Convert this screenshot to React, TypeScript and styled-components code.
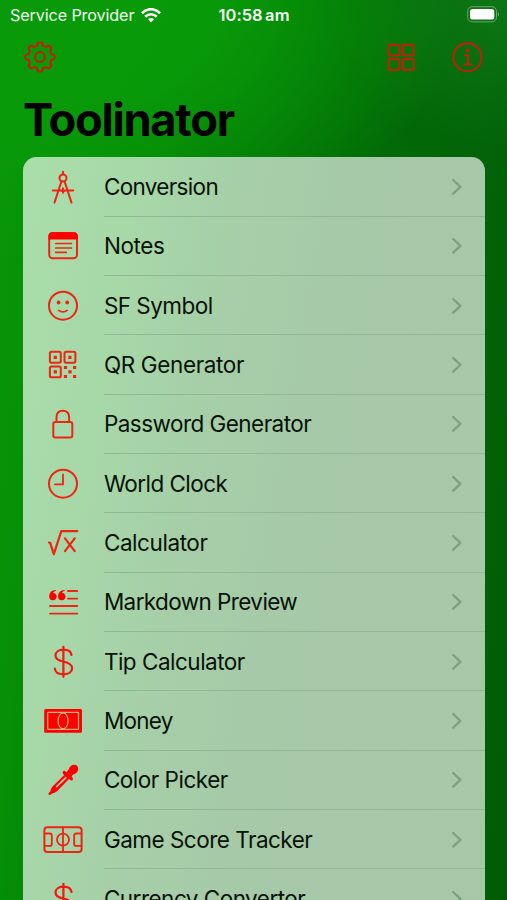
import React from "react";
import styled, { createGlobalStyle } from "styled-components";

const Global = createGlobalStyle`
  *, *::before, *::after { box-sizing: border-box; }
  body { margin: 0; overflow: hidden; }
`;

const Screen = styled.main`
  height: 900px;
  overflow: hidden;
  display: flex;
  flex-direction: column;
  font-family: Inter, "Liberation Sans", sans-serif;
  background:
    radial-gradient(ellipse 170px 150px at 100% 0, rgba(24, 136, 34, 0.5), transparent),
    radial-gradient(ellipse 400px 260px at 60px 0, #089a09 0%, rgba(8, 154, 9, 0.95) 40%, rgba(4, 140, 6, 0) 100%),
    linear-gradient(96deg, #089708 0%, #068f07 14%, #037a05 36%, #026c06 62%, #026308 84%, #015b05 100%);
`;

const StatusBar = styled.header`
  height: 30px;
  flex: none;
  display: grid;
  grid-template-columns: 1fr auto 1fr;
  align-items: center;
  padding: 0 8px 0 10px;
  color: #f1fff1;
  font-size: 16.5px;
`;

const Carrier = styled.div`
  display: flex;
  align-items: center;
  gap: 7px;
  white-space: nowrap;
  font-size: 16.2px;
  letter-spacing: -0.13px;
`;

const Time = styled.time`
  margin-right: 1px;
  font-weight: 600;
  letter-spacing: 0.04px;
  word-spacing: -1.8px;
`;

const Power = styled.div`
  display: flex;
  justify-content: flex-end;
  margin-top: -1px;
`;

const Toolbar = styled.nav`
  height: 54px;
  flex: none;
  display: flex;
  align-items: center;
  gap: 34px;
  padding: 0 22.5px 0 23.4px;
  color: #c81c0a;
`;

const ToolButton = styled.button<{ $push?: boolean }>`
  display: flex;
  padding: 0;
  border: 0;
  background: none;
  color: inherit;
  margin-right: ${(p) => (p.$push ? "auto" : "0")};
`;

const Title = styled.h1`
  height: 73.4px;
  flex: none;
  margin: 0;
  padding: 6px 0 0 23px;
  font-size: 45.3px;
  line-height: 60px;
  font-weight: 700;
  letter-spacing: -1.28px;
  color: #000;
`;

const List = styled.ul`
  flex: none;
  list-style: none;
  margin: 0 21.7px 0 22.6px;
  padding: 0;
  border-radius: 13.5px 13.5px 0 0;
  background: linear-gradient(100deg, #a9dea9 0%, #a7d8a8 20%, #a6cea8 38%, #a6c9a8 58%, #a8c7a9 100%);
`;

const Row = styled.li`
  height: 59.33px;
  display: flex;
  align-items: stretch;
`;

const IconCell = styled.div`
  width: 81.3px;
  flex: none;
  display: flex;
  align-items: center;
  justify-content: center;
  color: #ee2415;
`;

const RowBody = styled.div`
  flex: 1;
  display: flex;
  align-items: center;
  justify-content: space-between;
  padding: 1.2px 22px 0 0;
  border-bottom: 1px solid #91b795;
`;

const Label = styled.span<{ $tracking: number }>`
  font-size: 22.5px;
  line-height: 30px;
  letter-spacing: ${(p) => p.$tracking}px;
  color: #071207;
  white-space: nowrap;
`;

const Glyph = ({ children }: { children: React.ReactNode }) => (
  <svg width="44" height="44" viewBox="0 0 44 44" fill="none" stroke="currentColor" strokeWidth="2" strokeLinecap="round" strokeLinejoin="round">
    {children}
  </svg>
);

const gearPath = (() => {
  const points: string[] = [];
  for (let i = 0; i < 8; i++) {
    const base = i * 45;
    [[-17, 11.5], [-13, 12], [-11, 13.2], [-8.5, 14.2], [-4, 14.6], [4, 14.6], [8.5, 14.2], [11, 13.2], [13, 12], [17, 11.5], [22.5, 11.7]].forEach(([a, r]) => {
      const t = ((base + a) * Math.PI) / 180;
      points.push(`${(17 + r * Math.sin(t)).toFixed(2)} ${(17 - r * Math.cos(t)).toFixed(2)}`);
    });
  }
  return `M${points.join("L")}Z`;
})();

const Gear = () => (
  <svg width="34" height="34" viewBox="0 0 34 34" fill="none" stroke="currentColor" strokeWidth="2" strokeLinejoin="round">
    <path d={gearPath} />
    <circle cx="17" cy="17" r="4.9" />
  </svg>
);

const Grid = () => (
  <svg width="30" height="30" viewBox="0 0 30 30" fill="none" stroke="currentColor" strokeWidth="2">
    <rect x="1.500" y="2.800" width="10.800" height="10.800" rx="1.700" />
    <rect x="15.900" y="2.800" width="10.800" height="10.800" rx="1.700" />
    <rect x="1.500" y="17.200" width="10.800" height="10.800" rx="1.700" />
    <rect x="15.900" y="17.200" width="10.800" height="10.800" rx="1.700" />
  </svg>
);

const Info = () => (
  <svg width="34" height="34" viewBox="0 0 34 34" fill="none" stroke="currentColor" strokeWidth="2" strokeLinecap="round" strokeLinejoin="round">
    <circle cx="16.500" cy="17.200" r="14" />
    <circle cx="16.500" cy="10.500" r="1.900" fill="currentColor" stroke="none" />
    <path d="M13.700 15.200h3.300v9M13.400 24.400h6.800" strokeWidth="2" />
  </svg>
);

const Wifi = () => (
  <svg width="20" height="15" viewBox="0 0 20 15" fill="none" stroke="#fff" strokeWidth="2.700">
    <path d="M1 5.200C6-.1 14-.1 19 5.200M4.300 8.700c3.200-3.300 8.200-3.300 11.400 0" />
    <path d="M7 11.200c1.800-1.500 4.200-1.500 6 0L10 14.400Z" fill="#fff" stroke="none" />
  </svg>
);

const Battery = () => (
  <svg width="32" height="17" viewBox="0 0 32 17">
    <rect x=".7" y=".7" width="28.800" height="15.200" rx="4.500" fill="none" stroke="#6aa76d" />
    <rect x="3" y="3" width="24.300" height="10.600" rx="2.700" fill="#fff" />
    <path d="M30.800 6v4.600q1.400-.8 1.200-2.300t-1.200-2.300" fill="#6aa76d" />
  </svg>
);

const Chevron = () => (
  <svg width="12" height="18" viewBox="0 0 12 18" fill="none" stroke="#7da183" strokeWidth="2.400" strokeLinecap="round" strokeLinejoin="round">
    <path d="m2.200 2 7.200 6.800-7.200 6.800" />
  </svg>
);

const Compass = () => (
  <Glyph>
    <path d="M22 6.800V9M20.400 16.500 13.500 37.600M23.600 16.500l6.900 21.100M11.800 25.500h20.400M22 23.200v4.500" />
    <circle cx="22" cy="13" r="3.500" />
    <path d="M19.300 25.400q2.700 2 5.400 0" strokeWidth="1.200" />
  </Glyph>
);

const Note = () => (
  <Glyph>
    <rect x="8.200" y="9" width="27.800" height="25.200" rx="3.500" />
    <path d="M8.200 14.700v-2.300q0-3.400 3.400-3.400h21q3.400 0 3.400 3.400v2.300Z" fill="#f00" stroke="#f00" strokeWidth="1.500" />
    <path d="M14.800 19.500h15.600M14.800 24h15.600M14.800 28.400h10.400" strokeWidth="1.700" />
  </Glyph>
);

const Smile = () => (
  <Glyph>
    <circle cx="22" cy="21.700" r="14" />
    <circle cx="17.600" cy="18.500" r="1.900" fill="currentColor" stroke="none" />
    <circle cx="26.200" cy="18.500" r="1.900" fill="currentColor" stroke="none" />
    <path d="M17.600 26.400q4.300 3 8.600 0" strokeWidth="1.700" />
  </Glyph>
);

const QrCode = () => (
  <Glyph>
    <rect x="8.900" y="8.800" width="10.900" height="10.900" rx="1.600" />
    <rect x="23.500" y="8.800" width="10.900" height="10.900" rx="1.600" />
    <rect x="8.900" y="23.400" width="10.900" height="10.900" rx="1.600" />
    <path d="M12.700 12.700h3.200v3.200h-3.200ZM27.300 12.700h3.200v3.200h-3.200ZM12.700 27.200h3.200v3.200h-3.200ZM22.900 22.900h3.200v3.200h-3.200ZM32 22.900h3.200v3.200h-3.200ZM27.400 27.300h3.200v3.200h-3.200ZM22.900 31.900h3.200v3.200h-3.200ZM32 31.900h3.200v3.200h-3.200Z" fill="currentColor" stroke="none" />
  </Glyph>
);

const Lock = () => (
  <Glyph>
    <rect x="12.300" y="20" width="19" height="15.400" rx="2" />
    <path d="M15.500 20v-4.600q0-6.700 6.300-6.700t6.300 6.700V20" />
  </Glyph>
);

const Clock = () => (
  <Glyph>
    <circle cx="22" cy="21.700" r="14" />
    <path d="M22 12.400v10h-8" strokeWidth="1.800" />
  </Glyph>
);

const Root = () => (
  <Glyph>
    <path d="M8 21.600h1.100l3.700 11.500 7.500-23h16M24 17.400l9.700 12.800M33.700 17.400 24 30.200" strokeWidth="2.200" />
  </Glyph>
);

const Quote = () => (
  <Glyph>
    <path d="M27 11h9.200M27 18.600h9.200M9 26h27.200M9 33.600h27.200" strokeWidth="1.900" />
    <g fill="#f00" stroke="none">
      <path d="M14.800 10q-6.500.2-6.600 6.500a3.700 3.700 0 1 0 4-3.600q.5-1.500 2.600-1.800Z" />
      <path d="M23.700 10q-6.500.2-6.600 6.500a3.700 3.700 0 1 0 4-3.600q.5-1.500 2.600-1.800Z" />
    </g>
  </Glyph>
);

const Dollar = () => (
  <Glyph>
    <path d="M22.400 6.800v30M30.500 15c-.5-3.300-3.700-5.300-8.100-5.300-4.700 0-7.900 2.300-7.900 5.800 0 3.300 2.500 4.900 7.600 6 6 1.300 9 2.900 9 6.700 0 3.900-3.500 6.100-8.600 6.100-4.900 0-8.300-2.200-8.700-5.800" strokeWidth="2.200" stroke="#f01b10" />
  </Glyph>
);

const Banknote = () => (
  <Glyph>
    <rect x="3.200" y="10" width="37.800" height="23.800" rx="1.500" fill="#f00" stroke="none" />
    <g stroke="#d9b77b" strokeWidth="1.200">
      <rect x="6.700" y="13.400" width="30.800" height="17" rx=".5" />
      <ellipse cx="22.100" cy="21.900" rx="5" ry="8" />
    </g>
  </Glyph>
);

const Dropper = () => (
  <Glyph>
    <path d="M7.600 36.600Q7 36 8 34.800q1.400-1.300 1.900-3.400.3-1.400 1.700-2.800L23.200 17l-1-1q-1.400-1.400-.2-2.600t2.600 0l1.200.6 1.700-2.200q1.800-5 5.800-5 3.900.2 3.900 4.100 0 3.500-5 5.700L30.600 18.200l.8 1.200q1.200 1.600.1 2.600-1.200 1.100-2.600-.2l-1-.8L16 33.200q-1.300 1.200-3.200 1.700-1.700.4-3 1.500-1.400 1-2.200.2Z" fill="#f00" stroke="none" />
    <path d="m24.300 19.300-8.500 8.500-.6 1.400 1.400-.6 8.700-8.500Z" fill="#c7e5ba" stroke="#c7e5ba" strokeWidth=".6" />
  </Glyph>
);

const Pitch = () => (
  <Glyph>
    <rect x="3.400" y="9.300" width="37.200" height="24.800" rx="3" />
    <path d="M22 9.500v24.400M3.600 15.500h5.200q2 0 2 2v8.400q0 2-2 2H3.600M40.400 15.500h-5.200q-2 0-2 2v8.400q0 2 2 2h5.200" strokeWidth="1.800" />
    <circle cx="22" cy="21.700" r="6" strokeWidth="1.800" />
  </Glyph>
);

const tools: { label: string; icon: React.FC; tracking: number }[] = [
  { label: "Conversion", icon: Compass, tracking: -0.66 },
  { label: "Notes", icon: Note, tracking: -0.4 },
  { label: "SF Symbol", icon: Smile, tracking: -0.54 },
  { label: "QR Generator", icon: QrCode, tracking: -0.36 },
  { label: "Password Generator", icon: Lock, tracking: -0.54 },
  { label: "World Clock", icon: Clock, tracking: -0.55 },
  { label: "Calculator", icon: Root, tracking: -0.43 },
  { label: "Markdown Preview", icon: Quote, tracking: -0.6 },
  { label: "Tip Calculator", icon: Dollar, tracking: -0.5 },
  { label: "Money", icon: Banknote, tracking: -0.75 },
  { label: "Color Picker", icon: Dropper, tracking: -0.49 },
  { label: "Game Score Tracker", icon: Pitch, tracking: -0.51 },
  { label: "Currency Convertor", icon: Dollar, tracking: -0.51 },
];

export default function App() {
  return (
    <Screen>
      <Global />
      <StatusBar>
        <Carrier>Service Provider<Wifi /></Carrier>
        <Time>10:58 am</Time>
        <Power><Battery /></Power>
      </StatusBar>
      <Toolbar>
        <ToolButton $push aria-label="Settings"><Gear /></ToolButton>
        <ToolButton aria-label="Grid view"><Grid /></ToolButton>
        <ToolButton aria-label="Information"><Info /></ToolButton>
      </Toolbar>
      <Title>Toolinator</Title>
      <List>
        {tools.map(({ label, icon: Icon, tracking }) => (
          <Row key={label}>
            <IconCell><Icon /></IconCell>
            <RowBody><Label $tracking={tracking}>{label}</Label><Chevron /></RowBody>
          </Row>
        ))}
      </List>
    </Screen>
  );
}
